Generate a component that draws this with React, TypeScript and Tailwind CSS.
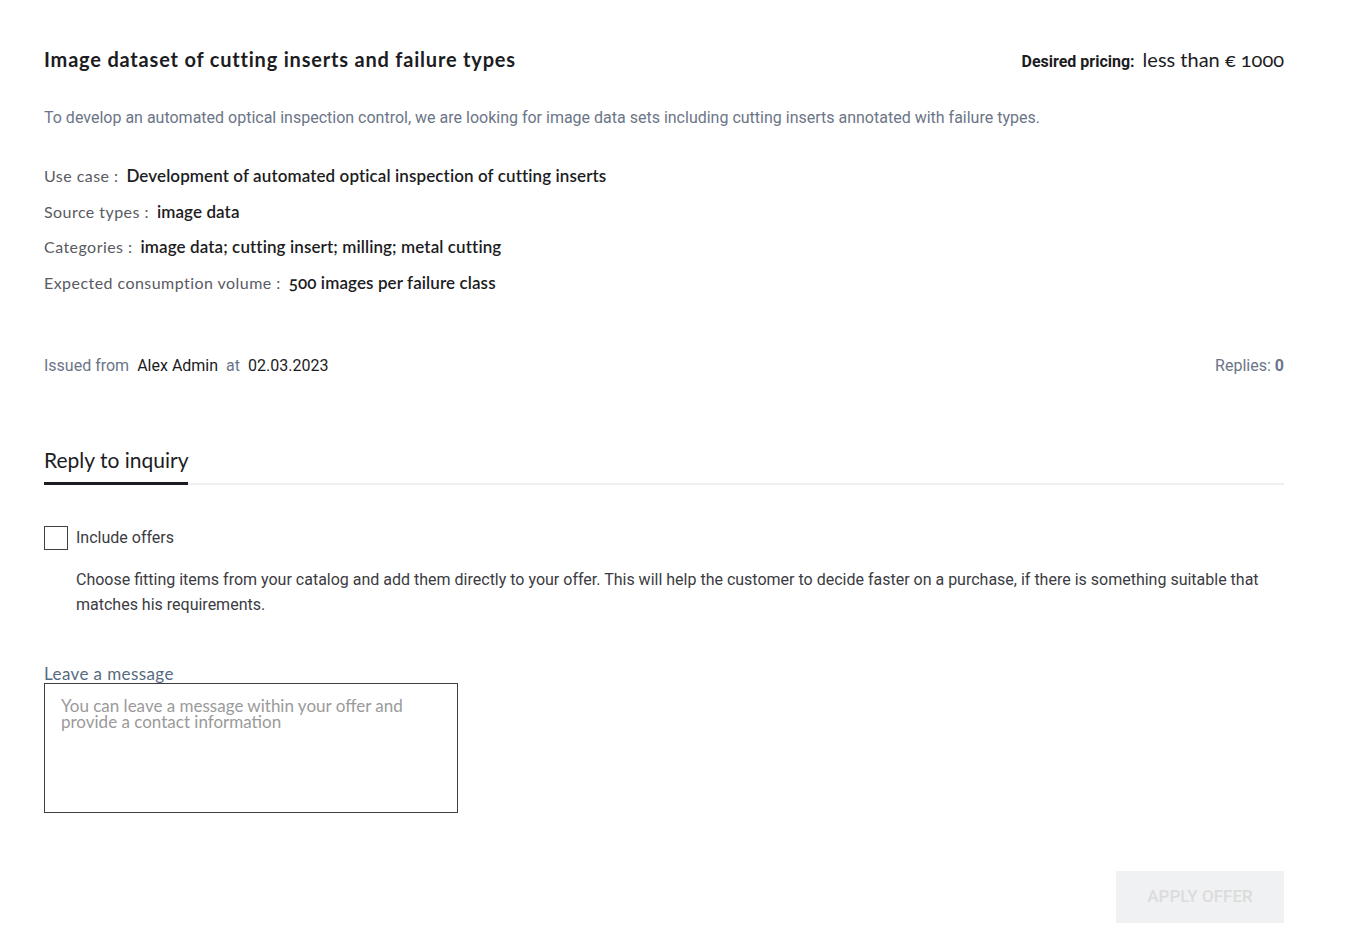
import React, { useState } from 'react';

const raleway = "font-['Lato','Open_Sans',sans-serif]";
const roboto = "font-['Roboto','Liberation_Sans',sans-serif]";

const details = [
  { label: 'Use case', value: 'Development of automated optical inspection of cutting inserts' },
  { label: 'Source types', value: 'image data' },
  { label: 'Categories', value: 'image data; cutting insert; milling; metal cutting' },
  { label: 'Expected consumption volume', value: '500 images per failure class' },
];

export default function App() {
  const [includeOffers, setIncludeOffers] = useState(false);
  const [message, setMessage] = useState('');

  return (
    <div className="min-h-screen bg-white">
      <div className="ml-[44px] w-[1240px] pt-[45px] pb-4">
        <div className="flex items-center justify-between h-[28px]">
          <h1 className={`${raleway} text-[20px] font-bold text-[#1c1c22] tracking-[0.8px]`}>
            Image dataset of cutting inserts and failure types
          </h1>
          <div className="flex items-baseline gap-2">
            <span className={`${roboto} text-[16px] font-bold text-[#1c1c22]`}>Desired pricing:</span>
            <span className={`${raleway} text-[20px] text-[#1c1c22] oldstyle-nums`}>less than € 1000</span>
          </div>
        </div>

        <p className={`${roboto} mt-[33px] text-[16px] leading-6 text-[#6b7587]`}>
          To develop an automated optical inspection control, we are looking for image data sets including cutting inserts annotated with failure types.
        </p>

        <div className="mt-[33px] flex flex-col gap-[11.5px]">
          {details.map((d) => (
            <div key={d.label} className={`${raleway} flex items-baseline h-6`}>
              <span className="text-[16px] tracking-[0.45px] text-[#5a5a62]">{d.label} :</span>
              <span className="ml-2 text-[17px] tracking-[0.1px] font-semibold text-[#1c1c22] oldstyle-nums">{d.value}</span>
            </div>
          ))}
        </div>

        <div className={`${roboto} mt-[60px] flex items-center justify-between h-6 text-[16px]`}>
          <div className="flex items-center">
            <span className="text-[#6b7587]">Issued from</span>
            <span className="ml-2 text-[#1c1c22]">Alex Admin</span>
            <span className="ml-2 text-[#6b7587]">at</span>
            <span className="ml-2 text-[#1c1c22]">02.03.2023</span>
          </div>
          <div className="text-[#6b7587]">
            Replies: <span className="font-bold">0</span>
          </div>
        </div>

        <div className="mt-[68px] border-b-2 border-[#f0f0f0] flex">
          <div className={`${raleway} text-[21px] text-[#1c1c22] pb-[8px] border-b-[3px] border-[#1c1c22] -mb-[2px] leading-7`}>
            Reply to inquiry
          </div>
        </div>

        <label className="mt-[41px] flex items-center gap-[8px] cursor-pointer">
          <input
            type="checkbox"
            checked={includeOffers}
            onChange={(e) => setIncludeOffers(e.target.checked)}
            className="sr-only"
          />
          <span className="w-6 h-6 border border-[#3f3f46] bg-white flex items-center justify-center">
            {includeOffers && <span className="w-3 h-3 bg-[#1c1c22]" />}
          </span>
          <span className={`${roboto} text-[16px] text-[#3b3b42]`}>Include offers</span>
        </label>

        <p className={`${roboto} mt-[17px] ml-8 text-[16px] leading-[25px] text-[#3b3b42] pr-3`}>
          Choose fitting items from your catalog and add them directly to your offer. This will help the customer to decide faster on a purchase, if there is something suitable that matches his requirements.
        </p>

        <div className="mt-[48px] w-[414px]">
          <div className={`${raleway} text-[17px] leading-[18px] tracking-[0.4px] text-[#566b82]`}>Leave a message</div>
          <textarea
            value={message}
            onChange={(e) => setMessage(e.target.value)}
            placeholder="You can leave a message within your offer and provide a contact information"
            className={`${raleway} block w-[414px] h-[130px] border border-[#3f3f46] px-4 py-[14px] text-[17px] leading-[16px] text-[#1c1c22] placeholder:text-[#9a9a9a] resize-none outline-none`}
          />
        </div>

        <div className="mt-[58px] flex justify-end">
          <button
            disabled
            className={`${roboto} w-[168px] h-[52px] bg-[#f0f1f3] text-[#dcdcdc] text-[17px] font-medium uppercase`}
          >
            Apply offer
          </button>
        </div>
      </div>
    </div>
  );
}
